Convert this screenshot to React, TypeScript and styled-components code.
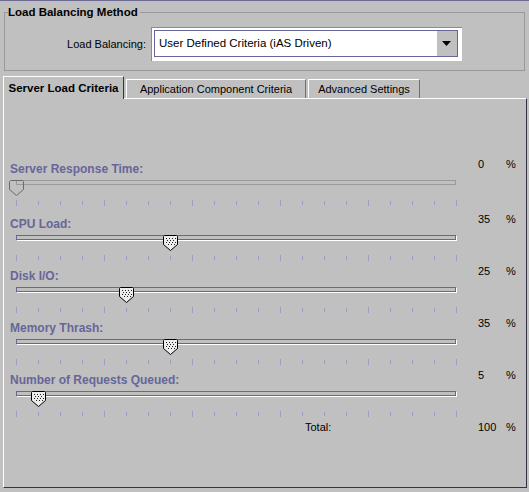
import React from "react";
import styled, { createGlobalStyle } from "styled-components";

const GlobalStyle = createGlobalStyle`
  html, body {
    margin: 0;
    padding: 0;
    background: #c0c0c0;
    font-family: "Liberation Sans", Arial, sans-serif;
  }
  * { box-sizing: border-box; }
`;

const Frame = styled.div`
  width: 529px;
  height: 492px;
  background: #c0c0c0;
  border-top: 1px solid #6b6b95;
  overflow: hidden;
`;

const GroupBox = styled.fieldset`
  margin: 4px 4px 0 4px;
  padding: 8px 0 9px 0;
  border: 1px solid #999999;
  min-width: 0;
`;

const GroupTitle = styled.legend`
  margin-left: 3px;
  padding: 0 2px 0 0;
  font-size: 11.5px;
  line-height: 14px;
  font-weight: bold;
  color: #000;
`;

const FieldRow = styled.div`
  display: flex;
  justify-content: center;
  align-items: center;
  gap: 5px;
`;

const FieldLabel = styled.span`
  font-size: 11px;
  color: #000;
`;

const ComboFrame = styled.div`
  display: flex;
  background: #fff;
  border-top: 1px solid #8c8c8c;
  border-left: 1px solid #8c8c8c;
  padding: 2px 4px 4px 2px;
`;

const ComboBox = styled.div`
  display: flex;
  width: 304px;
  height: 27px;
  border: 1px solid #666699;
`;

const ComboField = styled.div`
  flex: 1;
  background: #fff;
  padding-left: 4px;
  font-size: 11.5px;
  line-height: 25px;
  color: #000;
`;

const ComboButton = styled.div`
  width: 20px;
  background: #c0c0c0;
  display: flex;
  align-items: center;
  justify-content: center;
`;

const Tabs = styled.div`
  margin: 5px 2px 0 3px;
`;

const TabStrip = styled.div`
  display: flex;
  align-items: flex-end;
  gap: 2px;
  height: 22px;
`;

const Tab = styled.div<{ $active?: boolean; $w: number }>`
  width: ${(p) => p.$w}px;
  height: ${(p) => (p.$active ? 23 : 19)}px;
  margin-bottom: ${(p) => (p.$active ? -1 : 0)}px;
  position: relative;
  z-index: ${(p) => (p.$active ? 1 : 0)};
  background: #c0c0c0;
  border-top: 1px solid #fff;
  border-left: 1px solid #fff;
  border-right: 1px solid ${(p) => (p.$active ? "#333344" : "#6e6e7e")};
  display: flex;
  align-items: center;
  justify-content: center;
  padding-bottom: ${(p) => (p.$active ? 1 : 0)}px;
  font-size: ${(p) => (p.$active ? "11.5px" : "11px")};
  font-weight: ${(p) => (p.$active ? "bold" : "normal")};
  color: #000;
  white-space: nowrap;
`;

const Panel = styled.div`
  height: 390px;
  border-top: 1px solid #fff;
  border-left: 1px solid #fff;
  border-right: 1px solid #333344;
  border-bottom: 1px solid #333344;
  padding: 59px 0 0 6px;
`;

const Row = styled.div<{ $first?: boolean }>`
  height: ${(p) => (p.$first ? 55 : 52)}px;
`;

const Header = styled.div`
  display: grid;
  grid-template-columns: 468px 28px auto;
  align-items: start;
`;

const CriteriaLabel = styled.div`
  margin-top: 4px;
  font-size: 12px;
  line-height: 14px;
  font-weight: bold;
  color: #666699;
`;

const Value = styled.div`
  font-size: 11px;
  line-height: 13px;
  color: #000;
`;

const Slider = styled.div`
  position: relative;
  margin: 4px 0 0 6px;
  width: 440px;
  height: 16px;
`;

const Track = styled.div<{ $disabled?: boolean }>`
  margin-top: 4px;
  height: 5px;
  border: 1px solid ${(p) => (p.$disabled ? "#9a9a9a" : "#666699")};
  box-shadow: ${(p) => (p.$disabled ? "none" : "1px 1px 0 #fff")};
`;

const Thumb = styled.svg`
  position: absolute;
  top: 0;
`;

const Ticks = styled.div`
  display: flex;
  justify-content: space-between;
  align-items: center;
  margin: 4px 0 0 6px;
  width: 441px;
  height: 6px;
`;

const Tick = styled.div<{ $major?: boolean }>`
  width: 1px;
  height: ${(p) => (p.$major ? 6 : 4)}px;
  background: #9c9cc8;
`;

const TotalLabel = styled.div`
  padding-left: 295px;
  font-size: 11px;
  line-height: 13px;
  color: #000;
`;

const criteria = [
  { label: "Server Response Time:", value: 0, disabled: true },
  { label: "CPU Load:", value: 35 },
  { label: "Disk I/O:", value: 25 },
  { label: "Memory Thrash:", value: 35 },
  { label: "Number of Requests Queued:", value: 5 },
];

const dots = [
  [3, 3], [6, 3], [9, 3], [12, 3],
  [4, 5], [7, 5], [10, 5],
  [3, 7], [6, 7], [9, 7], [12, 7],
  [5, 9], [8, 9], [11, 9],
];

function SliderThumb({ value, disabled }: { value: number; disabled?: boolean }) {
  return (
    <Thumb width="15" height="16" viewBox="0 0 15 16" style={{ left: value * 4.4 - 7.5 }}>
      <path
        d="M1.5 0.5 H13.5 L14.5 1.5 V9.5 L7.5 15.5 L0.5 9.5 V1.5 Z"
        fill={disabled ? "none" : "#ececec"}
        stroke={disabled ? "#6a6a6a" : "#000"}
      />
      {!disabled && dots.map(([x, y]) => <rect key={`${x}-${y}`} x={x} y={y} width="1" height="1" fill="#222" />)}
    </Thumb>
  );
}

export default function App() {
  return (
    <>
      <GlobalStyle />
      <Frame>
        <GroupBox>
          <GroupTitle>Load Balancing Method</GroupTitle>
          <FieldRow>
            <FieldLabel>Load Balancing:</FieldLabel>
            <ComboFrame>
              <ComboBox>
                <ComboField>User Defined Criteria (iAS Driven)</ComboField>
                <ComboButton>
                  <svg width="9" height="5" viewBox="0 0 9 5">
                    <path d="M0 0 H9 L4.5 5 Z" fill="#000" />
                  </svg>
                </ComboButton>
              </ComboBox>
            </ComboFrame>
          </FieldRow>
        </GroupBox>

        <Tabs>
          <TabStrip>
            <Tab $active $w={121}>Server Load Criteria</Tab>
            <Tab $w={180}>Application Component Criteria</Tab>
            <Tab $w={112}>Advanced Settings</Tab>
          </TabStrip>
          <Panel>
            {criteria.map((c, i) => (
              <Row key={c.label} $first={i === 0}>
                <Header>
                  <CriteriaLabel>{c.label}</CriteriaLabel>
                  <Value>{c.value}</Value>
                  <Value>%</Value>
                </Header>
                <Slider>
                  <Track $disabled={c.disabled} />
                  <SliderThumb value={c.value} disabled={c.disabled} />
                </Slider>
                <Ticks>
                  {Array.from({ length: 21 }).map((_, t) => (
                    <Tick key={t} $major={t % 4 === 0} />
                  ))}
                </Ticks>
              </Row>
            ))}
            <Header>
              <TotalLabel>Total:</TotalLabel>
              <Value>100</Value>
              <Value>%</Value>
            </Header>
          </Panel>
        </Tabs>
      </Frame>
    </>
  );
}
